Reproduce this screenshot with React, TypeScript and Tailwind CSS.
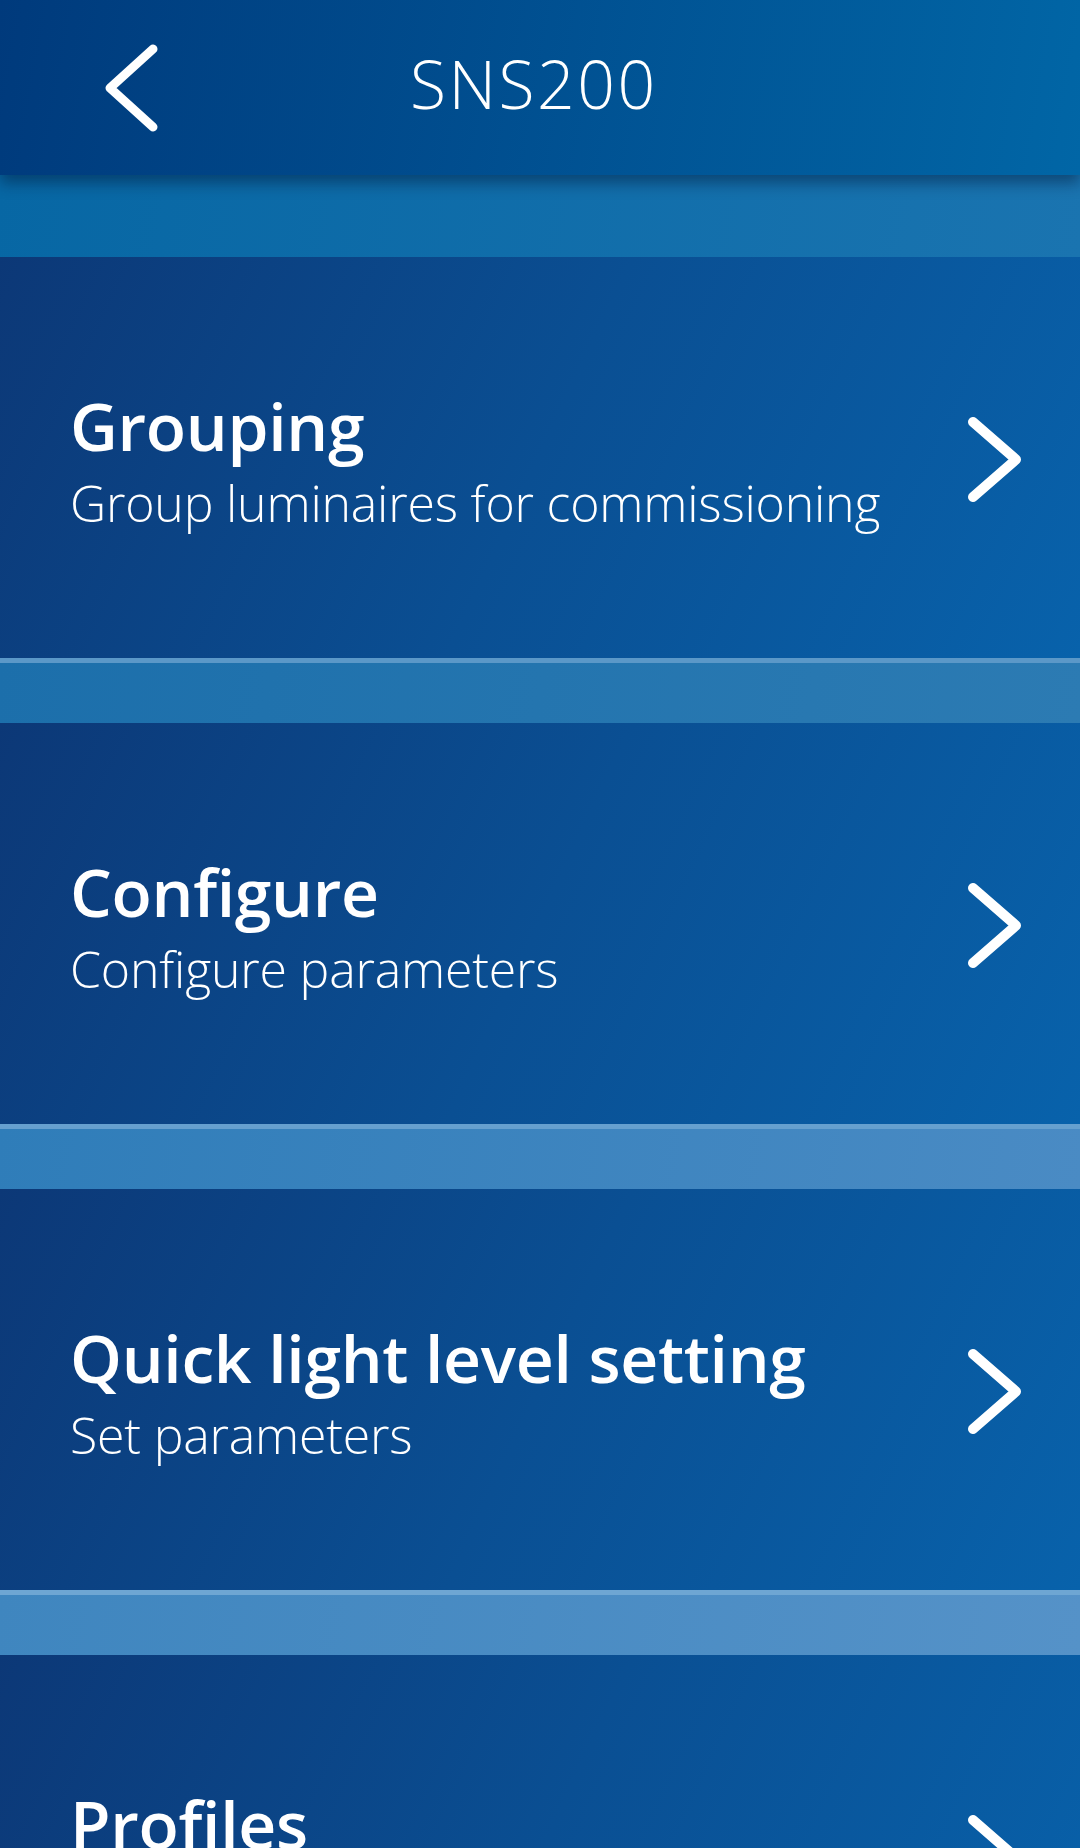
const items = [
  {
    title: "Grouping",
    desc: "Group luminaires for commissioning",
    line: "bg-[#4f92c6]",
    band: "bg-[linear-gradient(100deg,#0767a4,#1a74b0)]",
  },
  {
    title: "Configure",
    desc: "Configure parameters",
    line: "bg-[#5b98c8]",
    band: "bg-[linear-gradient(100deg,#1c6fab,#2c7bb3)]",
  },
  {
    title: "Quick light level setting",
    desc: "Set parameters",
    line: "bg-[#66a0cf]",
    band: "bg-[linear-gradient(100deg,#2f7db9,#4a8bc4)]",
  },
  {
    title: "Profiles",
    desc: "Set profiles",
    line: "bg-[#6ea6d3]",
    band: "bg-[linear-gradient(100deg,#3f86bf,#5592c8)]",
  },
];

export default function App() {
  return (
    <div className="w-[1080px] h-[1848px] overflow-hidden bg-[#0b4f94] font-['Open_Sans',sans-serif] text-white">
      {/* header */}
      <div className="relative z-10 h-[175px] flex items-start bg-[linear-gradient(100deg,#003a7c,#0166a6)] shadow-[0_8px_14px_rgba(0,20,50,0.45)]">
        <svg width="60" height="90" viewBox="0 0 60 90" className="ml-[100px] mt-[43px] shrink-0">
          <polyline points="53,6 10,45 53,84" fill="none" stroke="white" strokeWidth="9" strokeLinecap="round" strokeLinejoin="round" />
        </svg>
        <div className="ml-[250px] pt-[39px] text-[66px] leading-[88px] font-light tracking-[2.5px]">SNS200</div>
      </div>

      {items.map((it, i) => (
        <div key={i}>
          <div className={`h-[5px] ${it.line} ${i === 0 ? "hidden" : ""}`} />
          <div className={`${i === 0 ? "h-[82px]" : "h-[60px]"} ${it.band}`} />
          <div className="h-[401px] flex items-center justify-between pl-[70px] pr-[54px] bg-[linear-gradient(115deg,#0c3877_0%,#0a4f93_50%,#0862ab_100%)]">
            <div className="flex flex-col pt-[10px]">
              <span className="text-[66px] leading-[80px] font-semibold tracking-[-0.3px] whitespace-nowrap">{it.title}</span>
              <span className="text-[50px] leading-[76px] font-light tracking-[-0.2px] whitespace-nowrap">{it.desc}</span>
            </div>
            <svg width="60" height="89" viewBox="0 0 60 89" className="mt-[4px] shrink-0">
              <polyline points="7,7 50,44.5 7,82" fill="none" stroke="white" strokeWidth="10" strokeLinecap="round" strokeLinejoin="round" />
            </svg>
          </div>
        </div>
      ))}
    </div>
  );
}
